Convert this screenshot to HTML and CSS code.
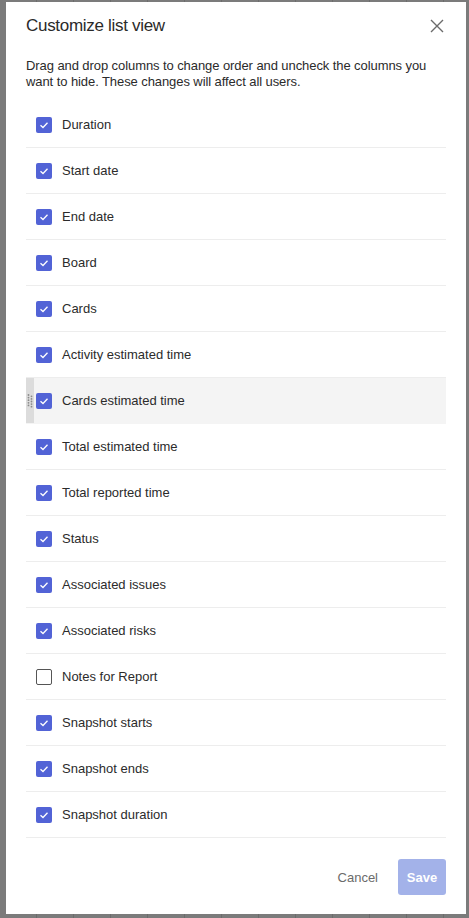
FILE: index.html
```html
<!DOCTYPE html>
<html>
<head>
<meta charset="utf-8">
<link rel="stylesheet" href="styles.css">
</head>
<body>
<div class="backdrop">
  <div class="modal">
    <div class="header">
      <h1 class="title">Customize list view</h1>
      <button class="close" aria-label="Close">
        <svg width="14" height="14" viewBox="0 0 14 14"><path d="M1 1L13 13M13 1L1 13" stroke="#6b6b6b" stroke-width="1.4" fill="none"/></svg>
      </button>
    </div>
    <p class="desc">Drag and drop columns to change order and uncheck the columns you want to hide. These changes will affect all users.</p>
    <ul class="list">
      <li class="row"><span class="cb on"></span><span class="label">Duration</span></li>
      <li class="row"><span class="cb on"></span><span class="label">Start date</span></li>
      <li class="row"><span class="cb on"></span><span class="label">End date</span></li>
      <li class="row"><span class="cb on"></span><span class="label">Board</span></li>
      <li class="row"><span class="cb on"></span><span class="label">Cards</span></li>
      <li class="row"><span class="cb on"></span><span class="label">Activity estimated time</span></li>
      <li class="row hover"><span class="grip"><svg width="8" height="16" viewBox="0 0 8 16"><g fill="#8a8a8a"><circle cx="2.5" cy="2" r="0.9"/><circle cx="5.5" cy="3.3" r="0.9"/><circle cx="2.5" cy="4.6" r="0.9"/><circle cx="5.5" cy="5.9" r="0.9"/><circle cx="2.5" cy="7.2" r="0.9"/><circle cx="5.5" cy="8.5" r="0.9"/><circle cx="2.5" cy="9.8" r="0.9"/><circle cx="5.5" cy="11.1" r="0.9"/><circle cx="2.5" cy="12.4" r="0.9"/><circle cx="5.5" cy="13.7" r="0.9"/></g></svg></span><span class="cb on"></span><span class="label">Cards estimated time</span></li>
      <li class="row"><span class="cb on"></span><span class="label">Total estimated time</span></li>
      <li class="row"><span class="cb on"></span><span class="label">Total reported time</span></li>
      <li class="row"><span class="cb on"></span><span class="label">Status</span></li>
      <li class="row"><span class="cb on"></span><span class="label">Associated issues</span></li>
      <li class="row"><span class="cb on"></span><span class="label">Associated risks</span></li>
      <li class="row"><span class="cb"></span><span class="label">Notes for Report</span></li>
      <li class="row"><span class="cb on"></span><span class="label">Snapshot starts</span></li>
      <li class="row"><span class="cb on"></span><span class="label">Snapshot ends</span></li>
      <li class="row"><span class="cb on"></span><span class="label">Snapshot duration</span></li>
    </ul>
    <div class="footer">
      <button class="btn-cancel">Cancel</button>
      <button class="btn-save">Save</button>
    </div>
  </div>
</div>
</body>
</html>
```
FILE: styles.css
```css
* { box-sizing: border-box; }
html, body { margin: 0; padding: 0; }
body {
  width: 469px;
  height: 918px;
  background: #7b7b7b;
  font-family: "Liberation Sans", Arial, sans-serif;
  color: #2b2b2b;
  overflow: hidden;
}
.backdrop {
  height: 918px;
  padding: 2px 3px 4px 6px;
  background-color: #7b7b7b;
  background-image: repeating-linear-gradient(90deg, transparent 0 36px, #6c6c6c 36px 37px);
}
.modal {
  background: #fff;
  width: 460px;
  height: 912px;
  padding: 0 20px 0 20px;
  display: flex;
  flex-direction: column;
}
.header {
  display: flex;
  align-items: center;
  justify-content: space-between;
  height: 46px;
  padding-top: 1px;
}
.title {
  margin: 0;
  font-size: 17px;
  letter-spacing: -0.3px;
  font-weight: 400;
  color: #2a2a2a;
}
.close {
  background: none;
  border: 0;
  padding: 0;
  width: 14px;
  height: 14px;
  margin-right: 2px;
  display: flex;
}
.desc {
  margin: 10px 0 0 0;
  font-size: 13px;
  line-height: 16px;
  letter-spacing: -0.08px;
  color: #2b2b2b;
}
.list {
  list-style: none;
  margin: 12px 0 0 0;
  padding: 0;
}
.row {
  position: relative;
  height: 46px;
  border-bottom: 1px solid #ededed;
  display: flex;
  align-items: center;
  padding-left: 10px;
}
.row.hover {
  background: #f4f4f4;
  border-bottom-color: #f4f4f4;
}
.grip {
  position: absolute;
  left: 0;
  top: 0;
  bottom: 0;
  width: 8px;
  background: #dcdcdc;
  display: flex;
  align-items: center;
}
.cb {
  width: 16px;
  height: 16px;
  border-radius: 2px;
  border: 1px solid #555;
  background: #fff;
  flex: none;
}
.cb.on {
  border: 0;
  background: #5263d6 url("data:image/svg+xml,%3Csvg xmlns='http://www.w3.org/2000/svg' width='16' height='16'%3E%3Cpath d='M4.5 8.2L7 10.5L11.5 5.8' stroke='white' stroke-width='1.3' fill='none'/%3E%3C/svg%3E") no-repeat center;
}
.label {
  margin-left: 10px;
  font-size: 13px;
  color: #2b2b2b;
}
.footer {
  display: flex;
  justify-content: flex-end;
  align-items: center;
  gap: 20px;
  margin-top: 21px;
}
.btn-cancel {
  background: none;
  border: 0;
  padding: 0;
  font-family: inherit;
  font-size: 13px;
  color: #6b6b6b;
}
.btn-save {
  width: 48px;
  height: 36px;
  border: 0;
  border-radius: 3px;
  background: #a3b2e9;
  color: #fff;
  font-family: inherit;
  font-size: 13px;
  font-weight: 700;
  padding: 0;
}
```
